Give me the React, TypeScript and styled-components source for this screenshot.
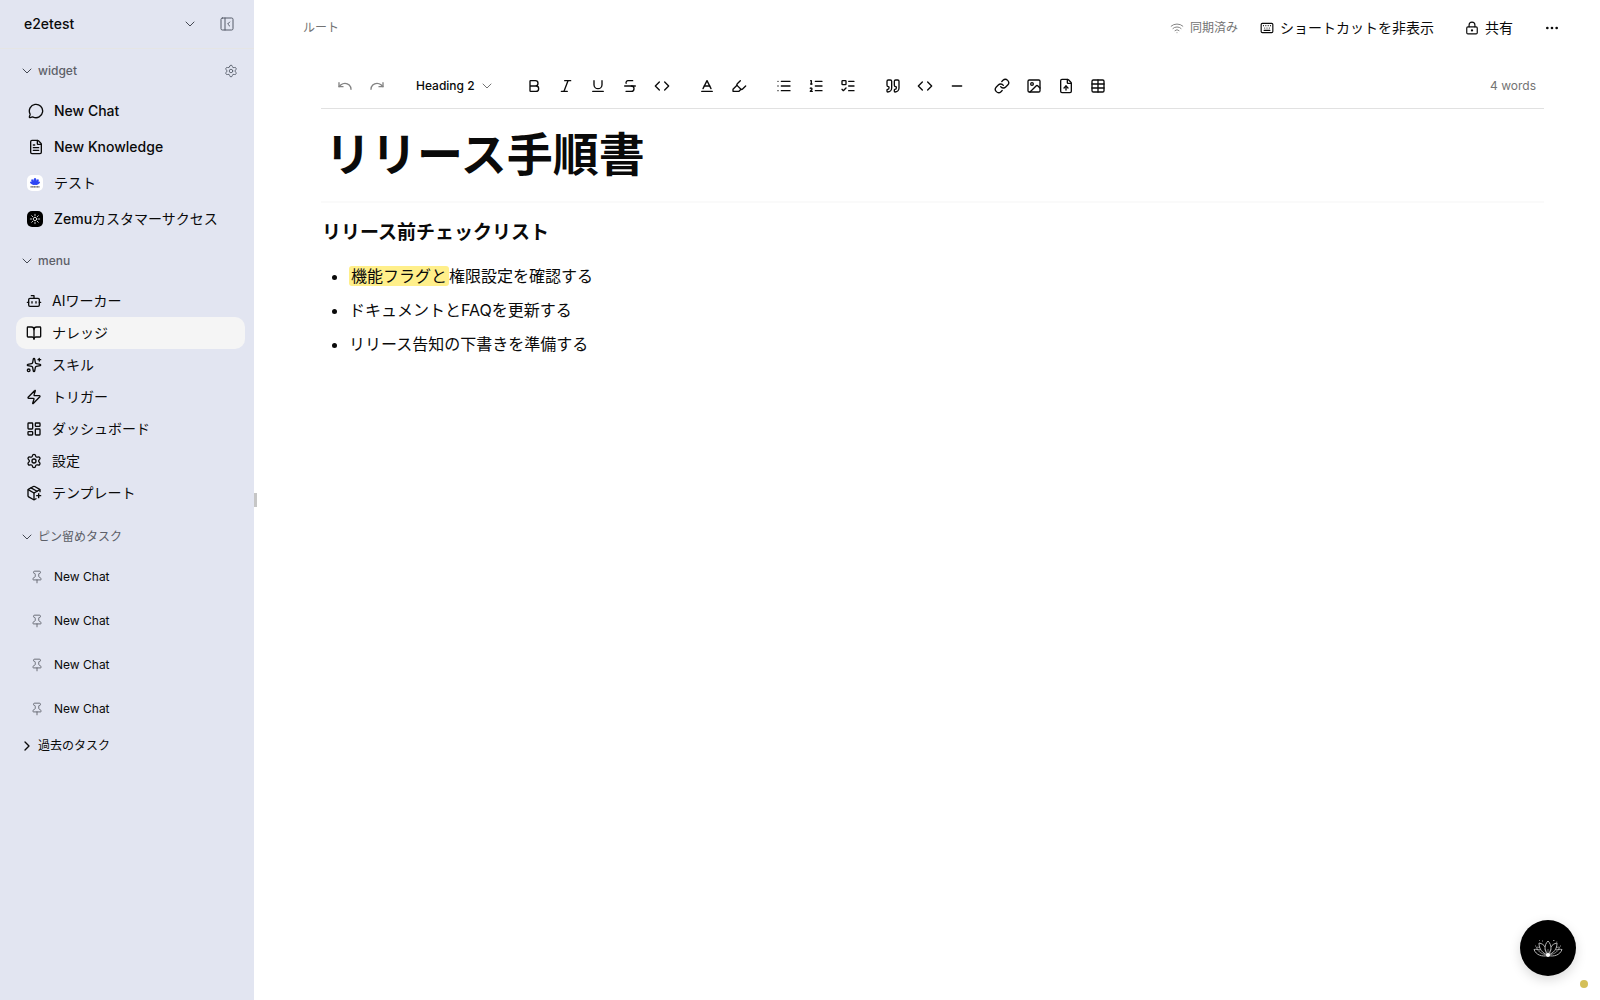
import React from "react";
import styled, { createGlobalStyle, css } from "styled-components";
import {
  Baseline, Bold, BookOpen, Bot, ChevronDown, ChevronRight, Code, Ellipsis, FileText, FileUp,
  Highlighter, Image, Italic, Keyboard, LayoutDashboard, Link, List, ListOrdered, ListTodo,
  LockKeyhole, MessageCircle, Minus, PackagePlus, PanelLeftClose, Pin, Quote, Redo, Settings,
  Sparkles, Strikethrough, Table, Underline, Undo, Wifi, Zap,
} from "lucide-react";

const GlobalStyle = createGlobalStyle`
  *, *::before, *::after { box-sizing: border-box; }
  body {
    margin: 0;
    background: #ffffff;
    color: #0a0a0a;
    font-family: Inter, "Noto Sans CJK JP", sans-serif;
    font-size: 14px;
    line-height: 20px;
    -webkit-font-smoothing: antialiased;
  }
  button, select { font: inherit; color: inherit; background: none; border: 0; padding: 0; margin: 0; cursor: pointer; }
  a { color: inherit; text-decoration: none; }
  ul { list-style: none; margin: 0; padding: 0; }
  svg { flex: none; display: block; }
`;

const Shell = styled.div`
  display: flex;
  min-height: 100vh;
`;

const Sidebar = styled.aside`
  position: relative;
  flex: none;
  width: 254px;
  background: #e2e5f1;
`;

const ResizeHandle = styled.div`
  position: absolute;
  top: 50%;
  left: 100%;
  width: 3px;
  height: 14px;
  margin-top: -7px;
  background: #c6c6c6;
`;

const SidebarHeader = styled.header`
  display: flex;
  align-items: center;
  height: 49px;
  padding: 0 19px 0 24px;
  border-bottom: 1px solid #e5e5e5;
`;

const Workspace = styled.button`
  flex: 1;
  display: flex;
  align-items: center;
  justify-content: space-between;
  font-weight: 500;
  padding-right: 21px;
  svg { color: #444852; }
`;

const GhostButton = styled.button`
  display: flex;
  color: #555b68;
`;

const SectionHead = styled.div<{ $size: "first" | "middle" | "last" }>`
  display: flex;
  align-items: center;
  justify-content: space-between;
  padding: 0 16px 0 19px;
  ${(p) => p.$size === "first" && css`height: 44px;`}
  ${(p) => p.$size === "middle" && css`height: 48px;`}
  ${(p) => p.$size === "last" && css`height: 46px; padding-top: 10px;`}
`;

const SectionToggle = styled.button<{ $strong?: boolean }>`
  display: flex;
  align-items: center;
  gap: 3px;
  font-size: 12px;
  font-weight: ${(p) => (p.$strong ? 400 : 500)};
  line-height: 16px;
  color: ${(p) => (p.$strong ? "#0a0a0a" : "#5c5f68")};
  svg { color: ${(p) => (p.$strong ? "#0a0a0a" : "#444852")}; }
`;

const PlainLabel = styled.span`
  font-weight: 400;
`;

const NavList = styled.ul`
  padding: 0 9px 0 16px;
`;

const NavLink = styled.a<{ $kind: "widget" | "menu" | "task"; $active?: boolean }>`
  display: flex;
  align-items: center;
  font-weight: 500;
  border-radius: 10px;
  padding: 0 10px;
  gap: 10px;
  ${(p) => p.$kind === "widget" && css`height: 36px; padding: 0 12px;`}
  ${(p) => p.$kind === "menu" && css`height: 32px; font-weight: 400;`}
  ${(p) => p.$kind === "task" && css`
    height: 44px;
    padding: 0 14px;
    font-size: 12px;
    font-weight: 400;
    svg { color: #5c5f68; }
  `}
  ${(p) => p.$active && css`background: #f5f5f5;`}
`;

/* The uploaded avatars sit one pixel further out than the line icons. */
const AvatarLink = styled(NavLink)`
  padding: 0 11px;
  gap: 11px;
`;

const PastTasks = styled.div`
  padding: 7px 19px;
`;

const Main = styled.main`
  flex: 1;
  min-width: 0;
`;

const TopBar = styled.header`
  display: flex;
  align-items: center;
  justify-content: space-between;
  height: 56px;
  padding: 0 40px 0 49px;
`;

const Crumb = styled.a`
  font-size: 12px;
  color: #737373;
`;

const Actions = styled.div`
  display: flex;
  align-items: center;
`;

const SyncState = styled.span`
  display: flex;
  align-items: center;
  gap: 6px;
  margin-right: 22px;
  font-size: 12px;
  color: #737373;
`;

const ActionButton = styled.button`
  display: flex;
  align-items: center;
  gap: 6px;
  margin-right: 31px;
  &:last-child { margin-right: 0; }
`;

const Editor = styled.section`
  padding: 8px 56px 0 67px;
`;

const Toolbar = styled.div`
  display: flex;
  align-items: center;
  height: 45px;
  padding: 0 8px;
  border-bottom: 1px solid #e1e1e1;
`;

const ToolGroup = styled.div`
  display: flex;
  margin-right: 13px;
`;

const ToolButton = styled.button`
  display: flex;
  align-items: center;
  justify-content: center;
  width: 32px;
  height: 32px;
  &:disabled { opacity: 0.5; color: #0a0a0a; }
`;

const BlockPicker = styled.label`
  display: flex;
  align-items: center;
  width: 96px;
  margin-right: 16px;
  padding-left: 10px;
  svg { color: #737373; margin-left: -16px; pointer-events: none; }
`;

const BlockSelect = styled.select`
  appearance: none;
  width: 79px;
  font-size: 12px;
  font-weight: 500;
  outline: none;
`;

const WordCount = styled.span`
  margin-left: auto;
  font-size: 12px;
  color: #737373;
`;

const Title = styled.h1`
  margin: 0;
  padding: 14px 4px 16px;
  border-bottom: 2px solid #fafafa;
  font-size: 46px;
  line-height: 62px;
  font-weight: 700;
`;

const Document = styled.article`
  padding: 16px 1px;
  font-size: 16px;
`;

const Subtitle = styled.h2`
  margin: 0 0 16px;
  font-size: 19px;
  line-height: 28px;
  font-weight: 700;
`;

const Bullets = styled.ul`
  list-style: disc;
  padding-left: 27px;
`;

const Bullet = styled.li`
  line-height: 26px;
  margin-bottom: 8px;
`;

const Marked = styled.mark`
  padding: 0 2px;
  border-radius: 3px;
  color: inherit;
  background: #ffef8a;
  line-height: 20px;
  display: inline-block;
`;

const AssistantButton = styled.button`
  position: fixed;
  right: 24px;
  bottom: 24px;
  display: flex;
  align-items: center;
  justify-content: center;
  width: 56px;
  height: 56px;
  border-radius: 50%;
  background: #000000;
  box-shadow: 0 4px 12px rgba(0, 0, 0, 0.15);
`;

const StatusDot = styled.span`
  position: fixed;
  right: 12px;
  bottom: 12px;
  width: 8px;
  height: 8px;
  border-radius: 50%;
  background: #d4bf58;
`;

const LotusBadge = () => (
  <svg width="16" height="16" viewBox="0 0 16 16" aria-hidden="true">
    <rect width="16" height="16" rx="5" fill="#fff" />
    <g fill="#2f47f5">
      <ellipse cx="8" cy="6.500" rx="1.600" ry="3.500" />
      <ellipse cx="6" cy="7" rx="1.300" ry="3" transform="rotate(-25 6 7)" />
      <ellipse cx="10" cy="7" rx="1.300" ry="3" transform="rotate(25 10 7)" />
      <ellipse cx="5.300" cy="8.300" rx="1.200" ry="2.600" transform="rotate(-60 5.300 8.300)" />
      <ellipse cx="10.700" cy="8.300" rx="1.200" ry="2.600" transform="rotate(60 10.700 8.300)" />
    </g>
    <path d="M3.500 11.800h9" stroke="#555" strokeWidth="1.200" strokeDasharray="1.300 .3" />
  </svg>
);

const SunBadge = () => (
  <svg width="16" height="16" viewBox="0 0 16 16" aria-hidden="true">
    <rect width="16" height="16" rx="5" fill="#000" />
    <g fill="none" stroke="#fff" strokeWidth=".8" strokeLinecap="round">
      <circle cx="8" cy="8" r="1.700" />
      <path d="M8 3.300v1.500M8 11.200v1.500M3.300 8h1.500M11.200 8h1.500M4.700 4.700l1 1M10.300 10.300l1 1M4.700 11.300l1-1M10.300 5.700l1-1" />
    </g>
  </svg>
);

const Lotus = () => (
  <svg width="30" height="20" viewBox="0 0 30 20" fill="none" stroke="#b4b4b4" strokeWidth="1" aria-hidden="true">
    <path d="M15 17c-4-4-4-10 0-14 4 4 4 10 0 14z" />
    <path d="M15 17C9 15 6 11 6 5c3 .5 5 2 6 4M15 17c6-2 9-6 9-12-3 .5-5 2-6 4" />
    <path d="M15 17.500C9 19 3 17 1 11.500c2-.4 4-.2 6 .5M15 17.500c6 1.500 12-.5 14-6-2-.4-4-.2-6 .5" />
    <path d="M15 17.500C10 16 5 15 3.500 9L7 9.500M15 17.500c5-1.500 10-2.500 11.500-8.500l-3.500.5" strokeWidth=".7" />
    <path d="M15 17l-3-6M15 17l3-6M15 17v-6" strokeWidth=".6" />
    <circle cx="15" cy="17" r="2" fill="#fff" stroke="none" />
    <path d="M9 3h1M20 2.500h1.500M2 8h1M27 8h1M6 2.500h.8M23.500 4h.8" strokeWidth=".8" />
  </svg>
);

const menu = [
  { label: "AIワーカー", Icon: Bot },
  { label: "ナレッジ", Icon: BookOpen, active: true },
  { label: "スキル", Icon: Sparkles },
  { label: "トリガー", Icon: Zap },
  { label: "ダッシュボード", Icon: LayoutDashboard },
  { label: "設定", Icon: Settings },
  { label: "テンプレート", Icon: PackagePlus },
];

const tools = [
  [["太字", Bold], ["斜体", Italic], ["下線", Underline], ["取り消し線", Strikethrough], ["コード", Code]],
  [["文字色", Baseline], ["ハイライト", Highlighter]],
  [["箇条書き", List], ["番号付きリスト", ListOrdered], ["タスクリスト", ListTodo]],
  [["引用", Quote], ["コードブロック", Code], ["区切り線", Minus]],
  [["リンク", Link], ["画像", Image], ["ファイル", FileUp], ["表", Table]],
] as [string, React.ComponentType<{ size?: number }>][][];

export default function App() {
  return (
    <>
      <GlobalStyle />
      <Shell>
        <Sidebar>
          <SidebarHeader>
            <Workspace>e2etest<ChevronDown size={16} strokeWidth={1.5} /></Workspace>
            <GhostButton aria-label="サイドバーを閉じる"><PanelLeftClose size={16} strokeWidth={1.5} /></GhostButton>
          </SidebarHeader>

          <SectionHead $size="first">
            <SectionToggle><ChevronDown size={16} strokeWidth={1.5} />widget</SectionToggle>
            <GhostButton aria-label="ウィジェット設定"><Settings size={14} strokeWidth={1.5} /></GhostButton>
          </SectionHead>
          <NavList>
            <li><NavLink $kind="widget" href="#"><MessageCircle size={16} />New Chat</NavLink></li>
            <li><NavLink $kind="widget" href="#"><FileText size={16} />New Knowledge</NavLink></li>
            <li><AvatarLink $kind="widget" href="#"><LotusBadge /><PlainLabel>テスト</PlainLabel></AvatarLink></li>
            <li><AvatarLink $kind="widget" href="#"><SunBadge /><span>Zemu<PlainLabel>カスタマーサクセス</PlainLabel></span></AvatarLink></li>
          </NavList>

          <SectionHead $size="middle">
            <SectionToggle><ChevronDown size={16} strokeWidth={1.5} />menu</SectionToggle>
          </SectionHead>
          <NavList>
            {menu.map(({ label, Icon, active }) => (
              <li key={label}>
                <NavLink $kind="menu" $active={active} href="#"><Icon size={16} />{label}</NavLink>
              </li>
            ))}
          </NavList>

          <SectionHead $size="last">
            <SectionToggle><ChevronDown size={16} strokeWidth={1.5} /><PlainLabel>ピン留めタスク</PlainLabel></SectionToggle>
          </SectionHead>
          <NavList>
            {[0, 1, 2, 3].map((n) => (
              <li key={n}><NavLink $kind="task" href="#"><Pin size={14} strokeWidth={1.5} />New Chat</NavLink></li>
            ))}
          </NavList>
          <PastTasks>
            <SectionToggle $strong><ChevronRight size={16} />過去のタスク</SectionToggle>
          </PastTasks>
          <ResizeHandle />
        </Sidebar>

        <Main>
          <TopBar>
            <Crumb href="#">ルート</Crumb>
            <Actions>
              <SyncState><Wifi size={14} strokeWidth={1.5} />同期済み</SyncState>
              <ActionButton><Keyboard size={14} />ショートカットを非表示</ActionButton>
              <ActionButton><LockKeyhole size={14} />共有</ActionButton>
              <ActionButton aria-label="その他"><Ellipsis size={16} /></ActionButton>
            </Actions>
          </TopBar>

          <Editor>
            <Toolbar>
              <ToolGroup>
                <ToolButton disabled aria-label="元に戻す"><Undo size={16} /></ToolButton>
                <ToolButton disabled aria-label="やり直す"><Redo size={16} /></ToolButton>
              </ToolGroup>
              <BlockPicker>
                <BlockSelect aria-label="ブロックの種類" defaultValue="h2">
                  <option value="h2">Heading 2</option>
                </BlockSelect>
                <ChevronDown size={16} strokeWidth={1.5} />
              </BlockPicker>
              {tools.map((group, i) => (
                <ToolGroup key={i}>
                  {group.map(([label, Icon]) => (
                    <ToolButton key={label} aria-label={label}><Icon size={16} /></ToolButton>
                  ))}
                </ToolGroup>
              ))}
              <WordCount>4 words</WordCount>
            </Toolbar>
            <Title>リリース手順書</Title>
            <Document>
              <Subtitle>リリース前チェックリスト</Subtitle>
              <Bullets>
                <Bullet><Marked>機能フラグと</Marked>権限設定を確認する</Bullet>
                <Bullet>ドキュメントとFAQを更新する</Bullet>
                <Bullet>リリース告知の下書きを準備する</Bullet>
              </Bullets>
            </Document>
          </Editor>
        </Main>
      </Shell>
      <AssistantButton aria-label="アシスタント"><Lotus /></AssistantButton>
      <StatusDot />
    </>
  );
}
